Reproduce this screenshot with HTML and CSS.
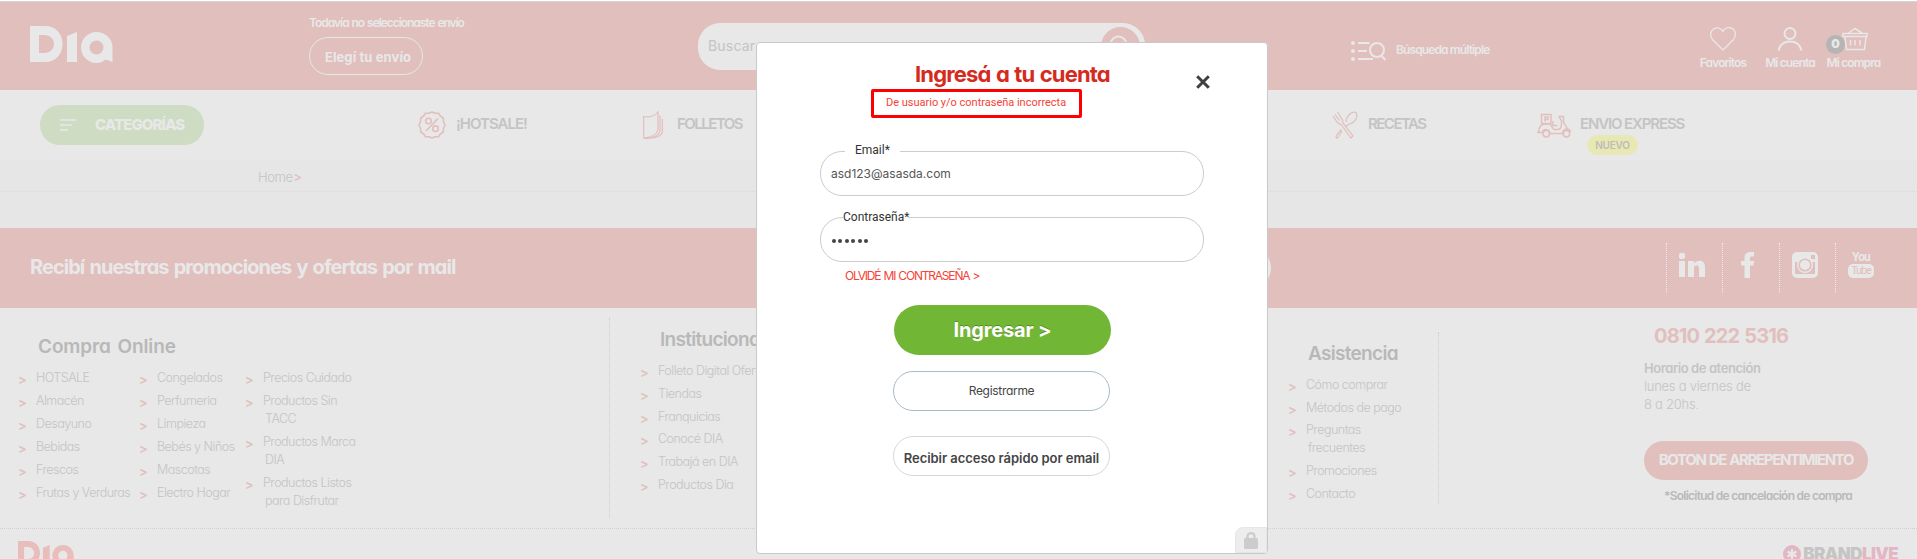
FILE: index.html
```html
<!DOCTYPE html>
<html lang="es">
<head>
<meta charset="utf-8">
<title>Dia - Ingresá a tu cuenta</title>
<link rel="stylesheet" href="styles.css">
</head>
<body>
<svg width="0" height="0" class="defs">
  <symbol id="dia" viewBox="0 0 83 37">
    <path fill-rule="evenodd" d="M0 0H15C26 0 32.500 8 32.500 18S26 36 15 36H0ZM9 9V27H14C20 27 24 23 24 18S20 9 14 9Z"/>
    <path d="M37 10L47 6V36H37Z"/>
    <path fill-rule="evenodd" d="M66.500 6C75.500 6 82.500 13 82.500 21V36L75.500 33.500C73 36 70 37 66.500 37C58 37 51 30 51 21.500S58 6 66.500 6ZM66.500 14.500A7 7 0 1 0 66.500 28.500A7 7 0 1 0 66.500 14.500Z"/>
  </symbol>
</svg>

<header class="top">
  <svg class="logo"><use href="#dia"/></svg>
  <div class="envio">
    <span class="envio-text">Todavía no seleccionaste envío</span>
    <span class="envio-btn">Elegí tu envío</span>
  </div>
  <div class="search">
    <span>Buscar</span>
    <i class="search-btn"><svg width="38" height="38" viewBox="0 0 38 38" fill="none" stroke="#e8e8e8" stroke-width="2"><circle cx="17.500" cy="17.500" r="8"/><path d="M23 23l6 6"/></svg></i>
  </div>
  <div class="multi">
    <svg width="35" height="20" viewBox="0 0 35 20" fill="none" stroke="#e8e8e8" stroke-width="2"><g fill="#e8e8e8" stroke="none"><circle cx="2" cy="2" r="2"/><circle cx="2" cy="10" r="2"/><circle cx="2" cy="18" r="2"/></g><path d="M7 2H18.500M7 10H16M7 18H22M30.500 15L34.500 19"/><circle cx="26" cy="9" r="7"/></svg>
    <span>Búsqueda múltiple</span>
  </div>
  <nav class="user">
    <a class="fav"><svg width="26" height="24" viewBox="0 0 26 24" fill="none" stroke="#e8e8e8" stroke-width="1.300"><path d="M13 23L2.500 12.500C-.5 9 .5 4 3.500 2C7-.3 11 1 13 4.500C15-.3 21-.5 24 3C26 6 25.500 9.500 23.500 12.500Z"/></svg><span>Favoritos</span></a>
    <a class="acc"><svg width="26" height="24" viewBox="0 0 26 24" fill="none" stroke="#e8e8e8" stroke-width="2"><circle cx="13" cy="6.500" r="5.500"/><path d="M1.500 23.500C3 17.500 7.500 14.500 13 14.500S23 17.500 24.500 23.500"/></svg><span>Mi cuenta</span></a>
    <a class="cart"><svg width="26" height="24" viewBox="0 0 26 24" fill="none" stroke="#e8e8e8" stroke-width="1.500"><path d="M1 6.500H25V9.500H1ZM3 10L4.500 22.500H22.500L24 10M6.500 6L13 1.500L20 6M8.500 13V18.500M13 13V18.500M18 13V18.500"/></svg><span>Mi compra</span><b class="count">0</b></a>
  </nav>
</header>

<nav class="menu">
  <a class="cats"><svg width="16" height="12" viewBox="0 0 16 12" stroke="#e8e8e8" stroke-width="1.700"><path d="M0 1H16M0 6H12M0 11H8"/></svg><span>CATEGORÍAS</span></a>
  <a class="item hot"><svg width="28" height="28" viewBox="0 0 28 28" fill="none" stroke="#e1bfbd" stroke-width="1.600"><path d="M14 1L17 2.200L20.500 2.200L22.300 5L25.300 7L25.400 10.500L27 14L25.400 17.500L25.300 21L22.300 23L20.500 25.800L17 25.800L14 27L11 25.800L7.500 25.800L5.700 23L2.700 21L2.600 17.500L1 14L2.600 10.500L2.700 7L5.700 5L7.500 2.200L11 2.200Z" stroke-linejoin="round"/><circle cx="10.500" cy="10" r="2.800"/><circle cx="17.500" cy="17.700" r="2.800"/><path d="M20 7.500L8 20"/></svg><span>¡HOTSALE!</span></a>
  <a class="item fol"><svg width="20" height="28" viewBox="0 0 20 28" fill="none" stroke="#e1bfbd" stroke-width="1.200"><path d="M.7 5.500C7 6.500 12 5 15 1V19C14 24 8 26 .7 27ZM17 4.500V20C16 25 9 27 1 27.200M19.300 8V22C17 26 9 27.500 2 27.400"/></svg><span>FOLLETOS</span></a>
  <a class="item rec"><svg width="26" height="28" viewBox="0 0 26 28" fill="none" stroke="#e1bfbd" stroke-width="1.200"><path d="M1 5L5 11C6 12.500 7 12.500 9 13.500L19 27L21 25L11 12C11 10 10.500 8.500 9.500 7.500L5.500 1M3 3.500L7.500 9.500M14 11C14 6 18 1 23 1C26 2 25.500 8 21.500 11C19 13 16.500 13 15.500 14L14 15.500M10 20L6 26.500C4.500 28 3 26 5.500 23L9.500 18.500"/></svg><span>RECETAS</span></a>
  <a class="item exp"><svg width="36" height="25" viewBox="0 0 36 25" fill="none" stroke="#e1bfbd" stroke-width="1.500" stroke-linejoin="round"><rect x="5.500" y="1.500" width="9.500" height="9"/><path d="M9 8.500V4H12V6.500H9M1 19.500H6.500C7 15.500 13.500 15.500 14 20.500H26.500C27 15.500 33 14.500 34.500 19M2.500 19C3 14 5 11 9 11H13C16 11 16.500 16.500 18 16.500H22C25 16.500 26 12 25.500 8L23 3.500H27.500V9L31.500 16M17 8V12.500H21.500"/><circle cx="10.300" cy="20.800" r="3.200"/><circle cx="30.500" cy="20.800" r="3.200"/></svg><span>ENVIO EXPRESS</span><em>NUEVO</em></a>
</nav>

<div class="crumbs"><div class="crumb"><span>Home</span><i>&gt;</i></div></div>

<section class="news">
  <h2>Recibí nuestras promociones y ofertas por mail</h2>
  <div class="news-field"></div>
  <div class="social">
    <a><svg width="28" height="28" viewBox="0 0 28 28" fill="#e8e8e8"><circle cx="4" cy="5" r="3.200"/><path d="M1 10H7V26H1ZM10 10H16V12.500C19 8.500 27 8.500 27 16V26H21V17.500C21 13 16 13 16 17.500V26H10Z"/></svg></a>
    <a><svg width="28" height="28" viewBox="0 0 28 28" fill="#e8e8e8"><path d="M10.500 27V14.500H7V10H10.500V7C10.500 3 13 1 16 1H20V5.500H18C16.500 5.500 16 6 16 7.500V10H20L19.500 14.500H16V27Z"/></svg></a>
    <a><svg width="28" height="28" viewBox="0 0 28 28"><rect x="1" y="1" width="26" height="26" rx="5" fill="#e8e8e8"/><path d="M4 11H8V20H20V11H24V23H4ZM20 4H24V8H20Z" fill="#e1bfbd"/><circle cx="14" cy="14" r="8" fill="#e8e8e8"/><circle cx="14" cy="14" r="5.800" fill="none" stroke="#e1bfbd" stroke-width="1.600"/></svg></a>
    <a class="yt"><b>You</b><span>Tube</span></a>
  </div>
</section>

<footer>
  <div class="cols">
    <section class="compra">
      <h3>Compra Online</h3>
      <div class="lists">
        <ul><li>HOTSALE</li><li>Almacén</li><li>Desayuno</li><li>Bebidas</li><li>Frescos</li><li>Frutas y Verduras</li></ul>
        <ul><li>Congelados</li><li>Perfumeria</li><li>Limpieza</li><li>Bebés y Niños</li><li>Mascotas</li><li>Electro Hogar</li></ul>
        <ul><li>Precios Cuidado</li><li>Productos Sin<br><span>TACC</span></li><li>Productos Marca<br><span>DIA</span></li><li>Productos Listos<br><span>para Disfrutar</span></li></ul>
      </div>
    </section>
    <section class="inst">
      <h3>Institucional</h3>
      <ul><li>Folleto Digital Ofertas</li><li>Tiendas</li><li class="tight">Franquicias</li><li>Conocé DIA</li><li>Trabajá en DIA</li><li>Productos Dia</li></ul>
    </section>
    <section class="asis">
      <h3>Asistencia</h3>
      <ul><li>Cómo comprar</li><li class="tight">Métodos de pago</li><li>Preguntas<br><span>frecuentes</span></li><li>Promociones</li><li>Contacto</li></ul>
    </section>
    <section class="phone">
      <h4>0810 222 5316</h4>
      <p><b>Horario de atención</b><br>lunes a viernes de<br>8 a 20hs.</p>
      <a class="regret">BOTON DE ARREPENTIMIENTO</a>
      <small>*Solicitud de cancelación de compra</small>
    </section>
  </div>
  <div class="bottom">
    <svg class="logo2"><use href="#dia"/></svg>
    <div class="brand"><svg width="18" height="18" viewBox="0 0 18 18"><circle cx="9" cy="9" r="9" fill="#e2b6c4"/><path d="M9 4V14M4.500 6.500L13.500 11.500M13.500 6.500L4.500 11.500" stroke="#e8e8e8" stroke-width="2.200"/></svg><b>BRAND<span>LIVE</span></b></div>
  </div>
</footer>

<div class="modal">
  <div class="head">
    <h1>Ingresá a tu cuenta</h1>
    <svg class="close" width="14" height="14" viewBox="0 0 14 14" stroke="#404040" stroke-width="3"><path d="M1.200 1.200L12.800 12.800M12.800 1.200L1.200 12.800"/></svg>
  </div>
  <div class="error">De usuario y/o contraseña incorrecta</div>
  <div class="field email"><label>Email*</label><span>asd123@asasda.com</span></div>
  <div class="field pass"><label>Contraseña*</label><span class="dots"><i></i><i></i><i></i><i></i><i></i><i></i></span></div>
  <a class="forgot">OLVIDÉ MI CONTRASEÑA &gt;</a>
  <a class="login">Ingresar &gt;</a>
  <a class="pill register">Registrarme</a>
  <a class="pill quick">Recibir acceso rápido por email</a>
  <div class="lock"><svg width="14" height="17" viewBox="0 0 14 17"><path d="M3.500 8V4.500C3.500 0 10.500 0 10.500 4.500V8" fill="none" stroke="#ccc" stroke-width="2.200"/><rect y="6" width="14" height="11" rx="1.500" fill="#ccc"/></svg></div>
</div>
</body>
</html>
```
FILE: styles.css
```css
* { box-sizing: border-box; margin: 0; padding: 0; }
html, body { height: 559px; overflow: hidden; }
body {
  position: relative; background: #e8e8e8; color: #c4c4c4;
  font-family: Inter, "Liberation Sans", sans-serif;
  font-feature-settings: "cv11" 1; border-top: 1px solid #fff;
}
span, a, b, h1, h2, h3, h4, li, small { white-space: nowrap; }
i, em { font-style: normal; }
svg { display: block; flex: none; }
.defs { position: absolute; }

/* header */
.top { height: 89px; background: #e1bfbd; border-top: 1px solid #d8d4d3; display: flex; color: #e8e8e8; }
.logo { width: 83px; height: 37px; margin: 24px 0 0 30px; fill: #e8e8e8; }
.envio { width: 389px; margin: 13px 0 0 196px; display: flex; flex-direction: column; align-items: flex-start; }
.envio-text { font-size: 12px; font-weight: 600; line-height: 16px; letter-spacing: -1.050px; word-spacing: 1px; }
.envio-btn { margin-top: 6px; width: 114px; height: 38px; border: 1px solid #e8e8e8; border-radius: 19px; text-align: center; font-size: 13px; font-weight: 700; line-height: 38px; letter-spacing: .1px; padding-left: 4px; }
.search { width: 447px; height: 47px; margin-top: 21px; background: #e8e8e8; border-radius: 22px; padding: 4px 5px 0 10px; display: flex; justify-content: space-between; color: #c4c4c4; font-size: 14px; line-height: 38px; letter-spacing: .2px; font-feature-settings: normal; }
.search-btn { width: 39px; height: 39px; border-radius: 50%; background: #e1bfbd; }
.multi { width: 349px; margin: 39px 0 0 206px; display: flex; gap: 10px; font-size: 12px; font-weight: 600; line-height: 18px; letter-spacing: -.88px; }
.user { display: flex; margin-top: 25px; font-size: 12px; font-weight: 600; line-height: 16px; letter-spacing: -.88px; }
.user a { display: flex; flex-direction: column; align-items: center; gap: 4px; }
.fav { width: 46px; }
.acc { width: 50px; margin-left: 19px; }
.cart { width: 55px; margin-left: 11px; position: relative; }
.cart svg { margin-left: 2px; }
.count { position: absolute; left: 0; top: 8px; width: 19px; height: 19px; border-radius: 50%; background: #b5b5b5; text-align: center; line-height: 18px; font-size: 12px; letter-spacing: 0; }

/* menu */
.menu { height: 70px; display: flex; padding: 15px 0 0 40px; font-size: 15px; font-weight: 600; }
.cats { width: 164px; height: 40px; border-radius: 20px; background: #cddcc2; color: #e8e8e8; display: flex; align-items: center; gap: 19px; padding-left: 20px; font-weight: 800; letter-spacing: -.92px; }
.cats span { margin-top: -1px; }
.item { height: 40px; display: flex; align-items: center; position: relative; }
.item > span { margin-top: -3px; }
.hot { width: 225px; margin-left: 214px; gap: 10px; letter-spacing: -1px; }
.fol { width: 689px; gap: 14px; letter-spacing: -1.500px; }
.rec { width: 204px; gap: 10px; letter-spacing: -1.500px; }
.exp { gap: 8px; letter-spacing: -1.120px; }
.item em { position: absolute; left: 51px; top: 30px; width: 51px; height: 20px; border-radius: 10px; background: #e8e8b5; color: #bdbdb5; text-align: center; font-size: 10px; line-height: 20px; letter-spacing: -.2px; }

.crumbs { height: 68px; background: #e6e6e6; }
.crumb { height: 32px; border-bottom: 1px dotted #dadada; padding: 8px 0 0 258px; display: flex; gap: 1px; font-size: 13px; line-height: 18px; font-weight: 300; letter-spacing: -.4px; }
.crumb i, li::before { color: #e1bfbd; }
.crumb i { font-weight: 500; }

/* newsletter */
.news { height: 80px; background: #e1bfbd; display: flex; color: #e8e8e8; }
.news h2 { width: 727px; margin-left: 30px; font-size: 20px; font-weight: 700; line-height: 78px; letter-spacing: -.95px; word-spacing: 1.300px; }
.news-field { width: 514px; height: 40px; margin: 20px 0 0; border-radius: 20px; background: #e8e8e8; }
.social { display: flex; margin: 15px 0 0 395px; }
.social a { width: 56.300px; height: 50px; border-left: 1px dotted #f0eaea; padding: 8px 0 0 11px; }
.social .yt { display: flex; flex-direction: column; align-items: flex-start; font-family: Roboto, sans-serif; padding-left: 12px; }
.yt b { width: 26px; font-size: 12px; line-height: 13px; text-align: center; letter-spacing: -1px; }
.yt span { width: 26px; height: 14px; border-radius: 5px; background: #e8e8e8; color: #e1bfbd; font-size: 11px; line-height: 14px; text-align: center; letter-spacing: -1.200px; }

/* footer */
.cols { height: 220px; display: flex; font-size: 12.500px; font-weight: 300; line-height: 18px; letter-spacing: -.5px; }
h3 { font-size: 19px; line-height: 24px; font-weight: 600; color: #b8b8b8; letter-spacing: -.7px; }
ul { list-style: none; display: flex; flex-direction: column; gap: 5px; }
li { position: relative; padding-left: 18px; }
li span { margin-left: 2px; }
li::before { content: ">"; position: absolute; left: 0; top: 1px; font-weight: 600; font-size: 13px; }
li.tight { margin-bottom: -1px; }
.compra { width: 610px; height: 200px; margin-top: 10px; border-right: 1px dotted #cfcfcf; padding: 17px 0 0 18px; }
.compra h3 { margin-left: 20px; letter-spacing: -.12px; word-spacing: 2px; }
.lists { display: flex; margin-top: 10px; }
.lists ul:nth-child(1) { width: 121px; }
.lists ul:nth-child(2) { width: 106px; }
.inst { width: 678px; padding: 20px 0 0 30px; }
.inst h3 { margin-left: 20px; }
.inst ul { margin-top: 10px; }
.asis { width: 151px; height: 172px; margin-top: 24px; border-right: 1px dotted #cfcfcf; padding-top: 10px; }
.asis h3 { margin-left: 20px; }
.asis ul { margin-top: 10px; }
.phone { margin-left: 205px; padding-top: 16px; display: flex; flex-direction: column; }
h4 { margin-left: 10px; font-size: 20px; line-height: 24px; color: #e1bfbd; font-weight: 700; letter-spacing: -.85px; word-spacing: 1px; }
.phone p { margin-top: 11px; font-size: 13px; letter-spacing: -.25px; }
.phone p b { font-weight: 600; letter-spacing: -.42px; }
.regret { margin-top: 28px; width: 224px; height: 39px; border-radius: 20px; background: #e1bfbd; color: #e8e8e8; text-align: center; font-size: 15px; font-weight: 700; line-height: 38px; letter-spacing: -1.350px; word-spacing: 1px; }
small { margin: 7px 0 0 20px; font-size: 12px; font-weight: 600; color: #b9b9b9; letter-spacing: -.75px; }
.bottom { height: 31px; border-top: 1px dotted #cfcfcf; padding: 12px 19px 0 18px; display: flex; justify-content: space-between; overflow: hidden; }
.logo2 { width: 56px; height: 25px; fill: #e8bdbb; }
.brand { display: flex; gap: 2px; margin-top: 4px; color: #c5c5c5; font-size: 17px; line-height: 18px; letter-spacing: -.6px; }
.brand b { font-weight: 900; }
.brand span { color: #e2b6c4; }

/* login dialog */
.modal { position: absolute; left: 756px; top: 41px; width: 512px; height: 512px; background: #fff; border: 1px solid #c9c9c9; border-radius: 4px; padding: 16px 0 0; color: #444; display: flex; flex-direction: column; align-items: flex-start; }
.head { display: flex; padding-left: 158px; }
.head h1 { width: 281px; font-size: 22px; line-height: 30px; font-weight: 700; color: #d52b1e; letter-spacing: -.85px; word-spacing: 1px; }
.close { margin-top: 16px; }
.error { width: 211px; height: 29px; margin-left: 114px; border: 3px solid #f00; border-radius: 2px; padding-left: 12px; font-family: Roboto, sans-serif; font-size: 11px; line-height: 21px; color: #f44336; letter-spacing: -.01px; white-space: nowrap; }
.field { width: 384px; height: 45px; margin-left: 63px; border: 1px solid #ccc; border-radius: 22px; position: relative; padding-left: 10px; }
.field label { position: absolute; top: -10px; background: #fff; line-height: 18px; font-family: Roboto, sans-serif; font-size: 12px; color: #333; white-space: nowrap; }
.field span { font-size: 12px; line-height: 44px; color: #555; font-feature-settings: normal; }
.email { margin-top: 33px; }
.email label { left: 24px; top: -11px; padding: 0 10px; }
.pass { margin-top: 21px; }
.pass label { left: 22px; }
.field .dots { display: flex; gap: 2.400px; padding: 21px 0 0 1px; }
.dots i { width: 4px; height: 4px; border-radius: 50%; background: #444; }
.forgot { margin: 5px 0 0 88px; font-size: 12px; line-height: 18px; color: #f44336; letter-spacing: -1.200px; word-spacing: 1px; }
.login { margin: 20px 0 0 137px; width: 217px; height: 50px; border-radius: 25px; background: #72b635; color: #fff; text-align: center; font-size: 20px; font-weight: 700; line-height: 50px; text-shadow: 0 -1px 0 rgba(0,0,0,.25); letter-spacing: -.15px; font-feature-settings: normal; }
.pill { width: 217px; height: 40px; margin-left: 136px; border-radius: 20px; border: 1px solid #d8d8d8; text-align: center; }
.register { margin-top: 16px; border-color: #a9bcc6; font-size: 12px; line-height: 38px; letter-spacing: -.3px; }
.quick { margin-top: 25px; font-size: 13px; font-weight: 600; line-height: 43px; letter-spacing: -.05px; font-feature-settings: normal; }
.lock { position: absolute; right: 0; bottom: 0; width: 32px; height: 26px; background: #ededed; border: 1px solid #e6e6e6; border-radius: 8px 0 0 0; padding: 4px 0 0 8px; }
```
